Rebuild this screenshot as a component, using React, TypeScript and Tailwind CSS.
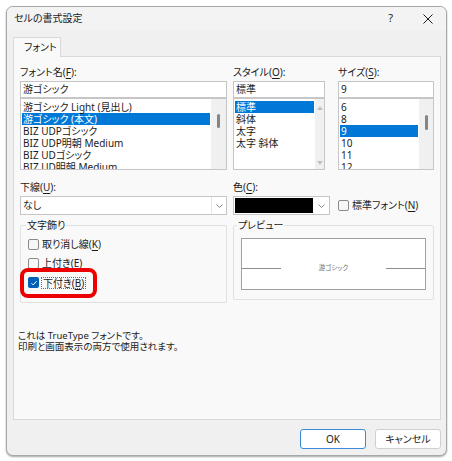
import React from 'react';

const U = ({ children }: { children: React.ReactNode }) => (
  <span className="underline decoration-[1px] underline-offset-[1.5px]">{children}</span>
);

function Label({ children }: { children: React.ReactNode }) {
  return <div className="h-[12px] leading-[12px] mb-[3px] whitespace-nowrap">{children}</div>;
}

function TextBox({ value }: { value: string }) {
  return (
    <div className="h-[17px] border border-[#c6c6c6] bg-white pl-[2px] leading-[15px] whitespace-nowrap">
      {value}
    </div>
  );
}

function Chevron() {
  return (
    <svg width="7" height="4" viewBox="0 0 7 4" fill="none">
      <polyline points="0.5,0.5 3.5,3.5 6.5,0.5" stroke="#8a8a8a" strokeWidth="1" />
    </svg>
  );
}

function ListBox({
  items,
  selected,
  trackClass,
  children,
}: {
  items: string[];
  selected: number;
  trackClass: string;
  children?: React.ReactNode;
}) {
  return (
    <div className="flex h-[72px] border border-[#c6c6c6] bg-white overflow-hidden">
      <div className="flex-1 min-w-0 pt-[2px] px-[1px]">
        {items.map((it, i) => (
          <div
            key={it}
            className={
              i === selected
                ? 'h-[12px] leading-[12px] pl-[1px] whitespace-nowrap bg-[#0078d7] text-white'
                : 'h-[12px] leading-[12px] pl-[1px] whitespace-nowrap'
            }
          >
            {it}
          </div>
        ))}
      </div>
      <div className={trackClass}>{children}</div>
    </div>
  );
}

function CheckBox({ checked }: { checked?: boolean }) {
  if (checked) {
    return (
      <div className="w-[11px] h-[11px] rounded-[2px] bg-[#005fb8] flex items-center justify-center shrink-0">
        <svg width="8" height="8" viewBox="0 0 8 8" fill="none">
          <path d="M1.5 4.2 L3.2 5.9 L6.6 2.2" stroke="white" strokeWidth="1" />
        </svg>
      </div>
    );
  }
  return <div className="w-[11px] h-[11px] rounded-[2px] border border-[#8a8a8a] bg-[#f7f7f7] shrink-0" />;
}

export default function App() {
  const fonts = [
    '游ゴシック Light (見出し)',
    '游ゴシック (本文)',
    'BIZ UDPゴシック',
    'BIZ UDP明朝 Medium',
    'BIZ UDゴシック',
    'BIZ UD明朝 Medium',
  ];
  const styles = ['標準', '斜体', '太字', '太字 斜体'];
  const sizes = ['6', '8', '9', '10', '11', '12'];

  return (
    <div className="w-[452px] h-[461px] bg-white pl-[6px] pt-[6px] text-[10px] text-[#1b1b1b] font-['Noto_Sans','Noto_Sans_CJK_JP',sans-serif] [font-feature-settings:'palt']">
      <div className="w-[441px] h-[450px] rounded-[7px] border border-[#a8a8a8] bg-[#f0f0f0] shadow-[0_1px_2px_rgba(0,0,0,0.35)] flex flex-col overflow-hidden">
        {/* title bar */}
        <div className="h-[23px] shrink-0 flex items-center pl-[7px] pr-[13px] bg-[#f3f3f3]">
          <span>セルの書式設定</span>
          <span className="ml-auto text-[11px]">?</span>
          <svg className="ml-[30px]" width="10" height="10" viewBox="0 0 10 10" fill="none">
            <path d="M0.5 0.5 L9.5 9.5 M9.5 0.5 L0.5 9.5" stroke="#1b1b1b" strokeWidth="1" />
          </svg>
        </div>

        <div className="flex-1 flex flex-col pl-[6px] pr-[5px] pt-[7px]">
          {/* tab */}
          <div className="relative z-10 -mb-[1px] h-[20px] w-[48px] border border-b-0 border-[#d9d9d9] bg-[#f9f9f9] pl-[10px] leading-[18px]">
            フォント
          </div>

          {/* panel */}
          <div className="h-[364px] border border-[#d9d9d9] bg-[#f9f9f9] pt-[9px] px-[6px]">
            {/* row 1 */}
            <div className="flex">
              <div className="w-[207px]">
                <Label>
                  フォント名(<U>F</U>):
                </Label>
                <TextBox value="游ゴシック" />
                <ListBox items={fonts} selected={1} trackClass="w-[15px] shrink-0 bg-[#f0f0f0] flex justify-center">
                  <div className="mt-[15px] w-[3px] h-[14px] rounded-full bg-[#858585]" />
                </ListBox>
              </div>
              <div className="w-[92px] ml-[6px]">
                <Label>
                  スタイル(<U>O</U>):
                </Label>
                <TextBox value="標準" />
                <ListBox
                  items={styles}
                  selected={0}
                  trackClass="w-[9px] shrink-0 bg-[#f0f0f0] flex flex-col items-center justify-between pt-[7px] pb-[4px]"
                >
                  <svg width="6" height="4" viewBox="0 0 6 4">
                    <polygon points="0,4 3,0 6,4" fill="#c2c2c2" />
                  </svg>
                  <svg width="6" height="4" viewBox="0 0 6 4">
                    <polygon points="0,0 6,0 3,4" fill="#c2c2c2" />
                  </svg>
                </ListBox>
              </div>
              <div className="w-[96px] ml-[13px]">
                <Label>
                  サイズ(<U>S</U>):
                </Label>
                <TextBox value="9" />
                <ListBox items={sizes} selected={2} trackClass="w-[14px] shrink-0 bg-[#f0f0f0] flex justify-center">
                  <div className="mt-[16px] w-[3px] h-[15px] rounded-full bg-[#858585]" />
                </ListBox>
              </div>
            </div>

            {/* row 2 */}
            <div className="flex mt-[11px]">
              <div className="w-[207px]">
                <Label>
                  下線(<U>U</U>):
                </Label>
                <div className="flex h-[19px] border border-[#c6c6c6] bg-white">
                  <div className="flex-1 pl-[2px] leading-[17px]">なし</div>
                  <div className="w-[15px] border-l border-[#e3e3e3] flex items-center justify-center">
                    <Chevron />
                  </div>
                </div>
              </div>
              <div className="w-[97px] ml-[6px]">
                <Label>
                  色(<U>C</U>):
                </Label>
                <div className="flex h-[19px] border border-[#c6c6c6] bg-white">
                  <div className="flex-1 m-[1px] bg-black" />
                  <div className="w-[15px] flex items-center justify-center">
                    <Chevron />
                  </div>
                </div>
              </div>
              <div className="ml-[8px] self-end h-[19px] flex items-center gap-[3px] whitespace-nowrap">
                <CheckBox />
                <span>
                  標準フォント(<U>N</U>)
                </span>
              </div>
            </div>

            {/* row 3 */}
            <div className="flex mt-[4px]">
              <fieldset className="w-[207px] h-[84px] border border-[#e1e1e1] rounded-[2px]">
                <legend className="ml-[5px] px-[1px] leading-[12px]">文字飾り</legend>
                <div className="flex flex-col pl-[7px] mt-[4px]">
                  <div className="h-[19px] flex items-center gap-[3px]">
                    <CheckBox />
                    <span>
                      取り消し線(<U>K</U>)
                    </span>
                  </div>
                  <div className="h-[19px] flex items-center gap-[3px]">
                    <CheckBox />
                    <span>
                      上付き(<U>E</U>)
                    </span>
                  </div>
                  <div className="relative h-[19px] flex items-center gap-[2px]">
                    <CheckBox checked />
                    <span className="border border-dotted border-[#6a6a6a] px-[1px] leading-[10px]">
                      下付き(<U>B</U>)
                    </span>
                    <div className="absolute left-[-8px] top-[-5px] w-[77px] h-[30px] rounded-[8px] border-[4px] border-[#ec0000]" />
                  </div>
                </div>
              </fieldset>

              <fieldset className="w-[201px] h-[81px] ml-[6px] border border-[#e1e1e1] rounded-[2px]">
                <legend className="ml-[3px] px-[1px] leading-[12px]">プレビュー</legend>
                <div className="mx-[7px] mt-[7px] h-[52px] border border-[#a0a0a0] bg-white pt-[25px]">
                  <div className="flex items-center h-[8px]">
                    <div className="w-[39px] h-px bg-[#8c8c8c]" />
                    <div className="flex-1 text-center text-[6.5px] leading-[8px] text-[#6a6a6a]">游ゴシック</div>
                    <div className="w-[39px] h-px bg-[#8c8c8c]" />
                  </div>
                </div>
              </fieldset>
            </div>

            {/* info text */}
            <div className="mt-[27px] -ml-[2px] text-[9.5px] leading-[11px]">
              <div>これは TrueType フォントです。</div>
              <div>印刷と画面表示の両方で使用されます。</div>
            </div>
          </div>

          {/* buttons */}
          <div className="flex justify-end gap-[9px] mt-[9px]">
            <button className="w-[66px] h-[20px] rounded-[3px] border border-[#3c8ad8] bg-white leading-[18px]">OK</button>
            <button className="w-[66px] h-[20px] rounded-[3px] border border-[#d0d0d0] bg-white leading-[18px]">キャンセル</button>
          </div>
        </div>
      </div>
    </div>
  );
}
